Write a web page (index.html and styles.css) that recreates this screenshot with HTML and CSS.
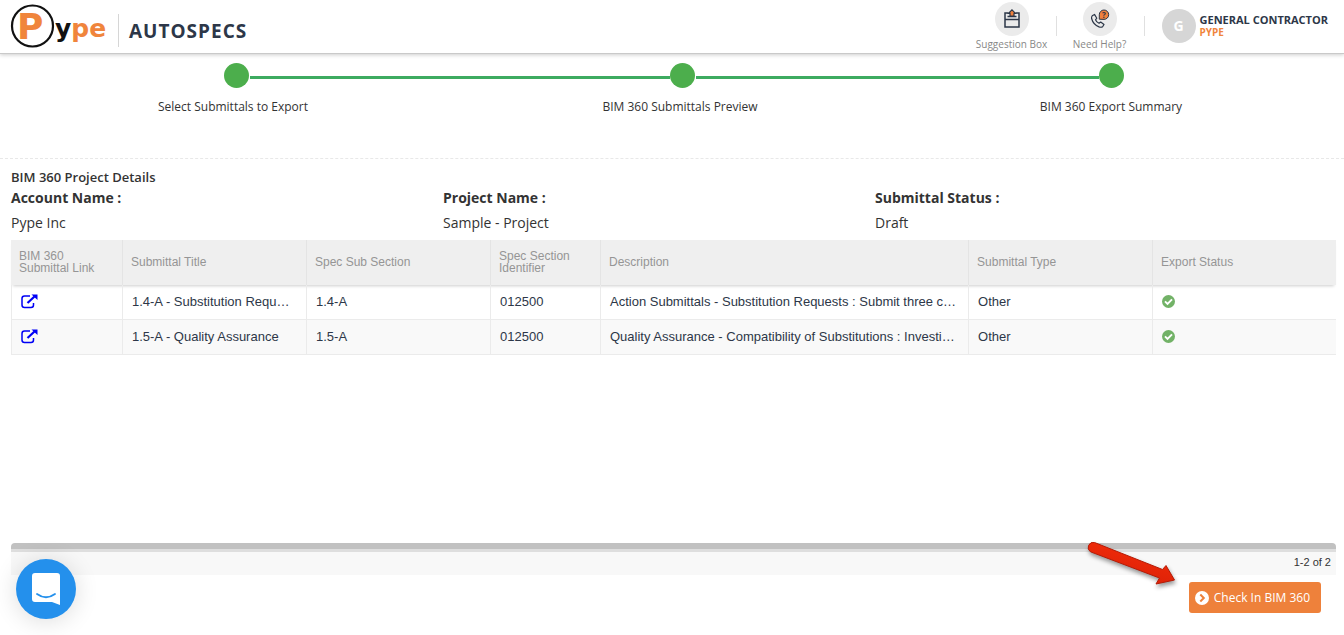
FILE: index.html
```html
<!DOCTYPE html>
<html lang="en">
<head>
    <meta charset="UTF-8">
    <meta name="viewport" content="width=device-width, initial-scale=1.0">
    <title>Pype AutoSpecs</title>
    <link rel="stylesheet" href="styles.css">
</head>
<body>
    <header class="topbar">
        <a class="logo" href="#">
            <svg width="100" height="46" viewBox="0 0 100 46">
                <circle cx="22.500" cy="23" r="20.500" fill="#fff" stroke="#111" stroke-width="2.200"/>
                <text class="logo-p" x="7" y="36">P</text>
                <text class="logo-ype" x="45" y="34">y<tspan class="logo-pe">pe</tspan></text>
            </svg>
        </a>
        <h1 class="product">AUTOSPECS</h1>
        <nav class="topbar-links">
            <a class="top-link" href="#">
                <span class="round">
                    <svg width="16" height="20" viewBox="0 0 16 20" fill="none" stroke="#2d3748" stroke-width="1.500">
                        <path d="M4.500 4H1v14h14V4h-3.500M1 10.500h14M3.500 7.500h9"/>
                        <path d="M8 .800L11.500 4.300H10V7H6V4.300H4.500z" fill="#f0803c" stroke-width="1.200"/>
                    </svg>
                </span>
                <span>Suggestion Box</span>
            </a>
            <a class="top-link" href="#">
                <span class="round">
                    <svg width="20" height="20" viewBox="0 0 20 20">
                        <path d="M2.200 6.800L4.500 5.400 6.800 9.200 5.500 10.800Q6.500 13.200 9 14.300L10.700 13 14 15.500 12.600 17.700Q11.200 18.700 9 17.900 3.200 15.600 1.600 9.500 1.300 7.800 2.200 6.800z" fill="none" stroke="#2d3748" stroke-width="1.200" stroke-linejoin="round"/>
                        <path d="M9.300 10.200V5.800A4.700 4.700 0 1 1 14 10.400z" fill="#f0803c" stroke="#2d3748" stroke-width="1"/>
                        <text class="question" x="12" y="9">?</text>
                    </svg>
                </span>
                <span>Need Help?</span>
            </a>
        </nav>
        <a class="account" href="#">
            <span class="avatar">G</span>
            <span class="account-text">
                <span class="account-name">GENERAL CONTRACTOR</span>
                <span class="account-company">PYPE</span>
            </span>
        </a>
    </header>

    <section class="steps">
        <div class="track">
            <span class="dot"></span>
            <span class="line line-first"></span>
            <span class="dot"></span>
            <span class="line line-second"></span>
            <span class="dot"></span>
        </div>
        <ol class="step-labels">
            <li>Select Submittals to Export</li>
            <li>BIM 360 Submittals Preview</li>
            <li>BIM 360 Export Summary</li>
        </ol>
    </section>

    <main class="content">
        <h2 class="section-title">BIM 360 Project Details</h2>
        <dl class="details">
            <div>
                <dt>Account Name :</dt>
                <dd>Pype Inc</dd>
            </div>
            <div>
                <dt>Project Name :</dt>
                <dd>Sample - Project</dd>
            </div>
            <div>
                <dt>Submittal Status :</dt>
                <dd>Draft</dd>
            </div>
        </dl>

        <div class="grid">
            <table>
                <colgroup>
                    <col class="col-link">
                    <col class="col-std">
                    <col class="col-std">
                    <col class="col-spec">
                    <col class="col-desc">
                    <col class="col-std">
                    <col>
                </colgroup>
                <thead>
                    <tr>
                        <th>BIM 360<br>Submittal Link</th>
                        <th>Submittal Title</th>
                        <th>Spec Sub Section</th>
                        <th>Spec Section<br>Identifier</th>
                        <th>Description</th>
                        <th>Submittal Type</th>
                        <th>Export Status</th>
                    </tr>
                </thead>
                <tbody>
                    <tr>
                        <td>
                            <a class="open-link" href="#" aria-label="Open submittal 1.4-A">
                                <svg width="17" height="15" viewBox="0 0 17 15" fill="none" stroke="#0000f5">
                                    <path d="M9 2H3.500Q1 2 1 4.500V11Q1 13.500 3.500 13.500H10Q12.500 13.500 12.500 11V9" stroke-width="1.500"/>
                                    <path d="M6.500 9L13.500 2.500" stroke-width="2.200"/>
                                    <path d="M10.500 .500h6V6z" fill="#0000f5" stroke="none"/>
                                </svg>
                            </a>
                        </td>
                        <td>1.4-A - Substitution Requests</td>
                        <td>1.4-A</td>
                        <td>012500</td>
                        <td>Action Submittals - Substitution Requests : Submit three c…</td>
                        <td>Other</td>
                        <td>
                            <svg class="status" role="img" aria-label="Exported" width="13" height="13" viewBox="0 0 13 13">
                                <circle cx="6.500" cy="6.500" r="6.500" fill="#72b267"/>
                                <path d="M3 6.400l2.500 2.500L10 4.400" fill="none" stroke="#fff" stroke-width="2"/>
                            </svg>
                        </td>
                    </tr>
                    <tr>
                        <td>
                            <a class="open-link" href="#" aria-label="Open submittal 1.5-A">
                                <svg width="17" height="15" viewBox="0 0 17 15" fill="none" stroke="#0000f5">
                                    <path d="M9 2H3.500Q1 2 1 4.500V11Q1 13.500 3.500 13.500H10Q12.500 13.500 12.500 11V9" stroke-width="1.500"/>
                                    <path d="M6.500 9L13.500 2.500" stroke-width="2.200"/>
                                    <path d="M10.500 .500h6V6z" fill="#0000f5" stroke="none"/>
                                </svg>
                            </a>
                        </td>
                        <td>1.5-A - Quality Assurance</td>
                        <td>1.5-A</td>
                        <td>012500</td>
                        <td>Quality Assurance - Compatibility of Substitutions : Investi…</td>
                        <td>Other</td>
                        <td>
                            <svg class="status" role="img" aria-label="Exported" width="13" height="13" viewBox="0 0 13 13">
                                <circle cx="6.500" cy="6.500" r="6.500" fill="#72b267"/>
                                <path d="M3 6.400l2.500 2.500L10 4.400" fill="none" stroke="#fff" stroke-width="2"/>
                            </svg>
                        </td>
                    </tr>
                </tbody>
            </table>
        </div>
        <div class="scrollbar"></div>
        <div class="grid-footer">1-2 of 2</div>

        <div class="actions">
            <button class="check-btn" type="button">
                <svg width="14" height="14" viewBox="0 0 14 14">
                    <circle cx="7" cy="7" r="7" fill="#fff"/>
                    <path d="M5.300 3.500L8.800 7l-3.500 3.500" fill="none" stroke="#ee813b" stroke-width="2"/>
                </svg>
                <span>Check In BIM 360</span>
            </button>
            <svg class="pointer" width="100" height="60" viewBox="0 0 100 60">
                <defs>
                    <linearGradient id="red" x1="0" y1="1" x2=".4" y2="0">
                        <stop offset="0" stop-color="#d81e06"/>
                        <stop offset="1" stop-color="#f02c0a"/>
                    </linearGradient>
                </defs>
                <path d="M14.500 5.500L82.500 32.500 86 28.500 94.500 43 76 47 79.500 41 10.500 14.800Q7 12.500 8.500 8.500 10.500 4.500 14.500 5.500z" fill="url(#red)" stroke="#b51a05" stroke-width="1" stroke-linejoin="round"/>
            </svg>
        </div>
    </main>

    <button class="chat" type="button" aria-label="Open chat">
        <svg width="28" height="32" viewBox="0 0 28 32">
            <path d="M3 0h22q3 0 3 3v29l-8-3H3q-3 0-3-3V3q0-3 3-3z" fill="#fff"/>
            <path d="M5 21q9 6.500 18 0" fill="none" stroke="#2490ec" stroke-width="1.800" stroke-linecap="round"/>
        </svg>
    </button>
</body>
</html>
```
FILE: styles.css
```css
* {
    box-sizing: border-box;
}

body {
    display: flex;
    flex-direction: column;
    min-height: 100vh;
    margin: 0;
    font-family: "Open Sans", sans-serif;
    font-size: 12px;
    color: #333;
    background-color: #fff;
}

a {
    color: inherit;
    text-decoration: none;
}

/* Top bar */
.topbar {
    display: flex;
    align-items: center;
    height: 54px;
    padding: 0 16px 2px 10px;
    border-bottom: 1px solid #c9c9c9;
    box-shadow: 0 1px 4px rgba(0, 0, 0, 0.2);
}

.logo {
    display: flex;
    width: 108px;
    height: 46px;
}

.logo-p {
    font: 700 36px "DejaVu Sans", sans-serif;
    fill: #f0853c;
}

.logo-ype {
    font: 700 25px "DejaVu Sans", sans-serif;
    fill: #111;
}

.logo-pe {
    fill: #f0853c;
}

.product {
    display: flex;
    align-items: center;
    height: 33px;
    margin: 10px auto 0 0;
    padding-left: 10px;
    border-left: 1px solid #d6d6d6;
    font-size: 19px;
    font-weight: 700;
    line-height: 24px;
    letter-spacing: 1px;
    color: #2d3748;
}

.topbar-links {
    display: flex;
}

.top-link {
    display: flex;
    flex-direction: column;
    align-items: center;
    width: 88px;
    padding-right: 2px;
    font-size: 10px;
    line-height: 12px;
    color: #888;
}

.round {
    display: flex;
    align-items: center;
    justify-content: center;
    width: 34px;
    height: 34px;
    margin-bottom: 2px;
    border-radius: 50%;
    background-color: #ebebeb;
}

.question {
    font-size: 8px;
    font-weight: 700;
    fill: #2d3748;
}

.top-link::after {
    content: "";
    align-self: flex-end;
    width: 1px;
    height: 20px;
    margin: -34px -2px 14px 0;
    background-color: #e0e0e0;
}

.account {
    display: flex;
    align-items: center;
    gap: 4px;
    margin-left: 17px;
}

.avatar {
    display: flex;
    align-items: center;
    justify-content: center;
    width: 34px;
    height: 34px;
    border-radius: 50%;
    font-size: 14px;
    font-weight: 700;
    color: #fff;
    background-color: #d6d6d6;
}

.account-text {
    display: flex;
    flex-direction: column;
    font-weight: 700;
    font-size: 11px;
    line-height: 12px;
}

.account-name {
    color: #2d3748;
}

.account-company {
    font-size: 10px;
    color: #f0853c;
}

/* Progress steps */
.steps {
    height: 105px;
    padding-top: 9px;
    border-bottom: 1px dashed #e8e8e8;
}

.track {
    display: flex;
    align-items: center;
    margin: 0 220px 0 224px;
}

.dot {
    width: 25px;
    height: 25px;
    border-radius: 50%;
    background-color: #4cae4c;
}

.line {
    height: 3px;
    margin: 3px 0 0 1px;
    background-color: #3dab60;
}

.line-first {
    flex: 421;
}

.line-second {
    flex: 404;
}

.step-labels {
    display: grid;
    grid-template-columns: 466fr 428fr 434fr;
    margin: 10px 0 0;
    padding: 0 16px 0 0;
    list-style: none;
    line-height: 18px;
    text-align: center;
}

/* Project details */
.content {
    display: flex;
    flex: 1;
    flex-direction: column;
    padding: 9px 8px 22px 11px;
}

.section-title {
    margin: 0;
    font-size: 13px;
    font-weight: 600;
    line-height: 19px;
}

.details {
    display: grid;
    grid-template-columns: 432fr 432fr 461fr;
    margin: 0;
    font-size: 14px;
    line-height: 22px;
}

.details dt {
    font-weight: 700;
}

.details dd {
    margin: 3px 0 6px;
}

/* Submittals grid */
.grid {
    flex: 1;
    font-family: "Liberation Sans", Arial, sans-serif;
}

table {
    width: 100%;
    table-layout: fixed;
    border-collapse: separate;
    border-spacing: 0;
}

.col-link {
    width: 8.45%;
}

.col-std {
    width: 13.89%;
}

.col-spec {
    width: 8.3%;
}

.col-desc {
    width: 27.78%;
}

thead {
    box-shadow: 0 3px 3px -2px rgba(0, 0, 0, 0.2);
}

th {
    height: 45px;
    padding: 0 8px 2px;
    border-right: 1px solid #e4e4e4;
    font-size: 12px;
    font-weight: 400;
    line-height: 12px;
    text-align: left;
    color: #959595;
    background-color: #efefef;
}

td {
    height: 35px;
    padding: 0 11px 0 9px;
    overflow: hidden;
    border-right: 1px solid #ebebeb;
    border-bottom: 1px solid #ebebeb;
    font-size: 13px;
    line-height: 16px;
    white-space: nowrap;
    text-overflow: ellipsis;
    color: #2d3748;
}

td:first-child {
    border-left: 1px solid #ebebeb;
}

th:last-child,
td:last-child {
    border-right: none;
}

tbody tr:nth-child(even) {
    background-color: #f9f9f9;
}

.open-link svg {
    display: block;
}

.open-link,
.status {
    display: block;
    margin-bottom: 2px;
}

.scrollbar {
    height: 9px;
    border-bottom: 3px solid #dedede;
    border-radius: 4px 4px 0 0;
    background-color: #c1c1c1;
}

.grid-footer {
    height: 23px;
    padding-right: 5px;
    font-family: "Liberation Sans", Arial, sans-serif;
    font-size: 11px;
    line-height: 21px;
    text-align: right;
    background-color: #f8f8f8;
}

/* Actions */
.actions {
    position: relative;
    display: flex;
    justify-content: flex-end;
    padding: 7px 15px 0 0;
}

.check-btn {
    display: flex;
    align-items: center;
    gap: 5px;
    height: 31px;
    padding: 0 11px 0 6px;
    border: none;
    border-radius: 3px;
    font-family: inherit;
    font-size: 12px;
    color: #fff;
    background-color: #ee813b;
    cursor: pointer;
}

.check-btn:hover {
    background-color: #dc7029;
}

.pointer {
    position: absolute;
    right: 156px;
    bottom: 16px;
    filter: drop-shadow(1px 3px 2px rgba(0, 0, 0, 0.4));
    pointer-events: none;
}

.chat {
    position: fixed;
    bottom: 16px;
    left: 16px;
    display: flex;
    align-items: center;
    justify-content: center;
    width: 60px;
    height: 60px;
    padding: 0;
    border: none;
    border-radius: 50%;
    background-color: #2490ec;
    box-shadow: 0 2px 24px rgba(0, 0, 0, 0.14);
    cursor: pointer;
}
```
